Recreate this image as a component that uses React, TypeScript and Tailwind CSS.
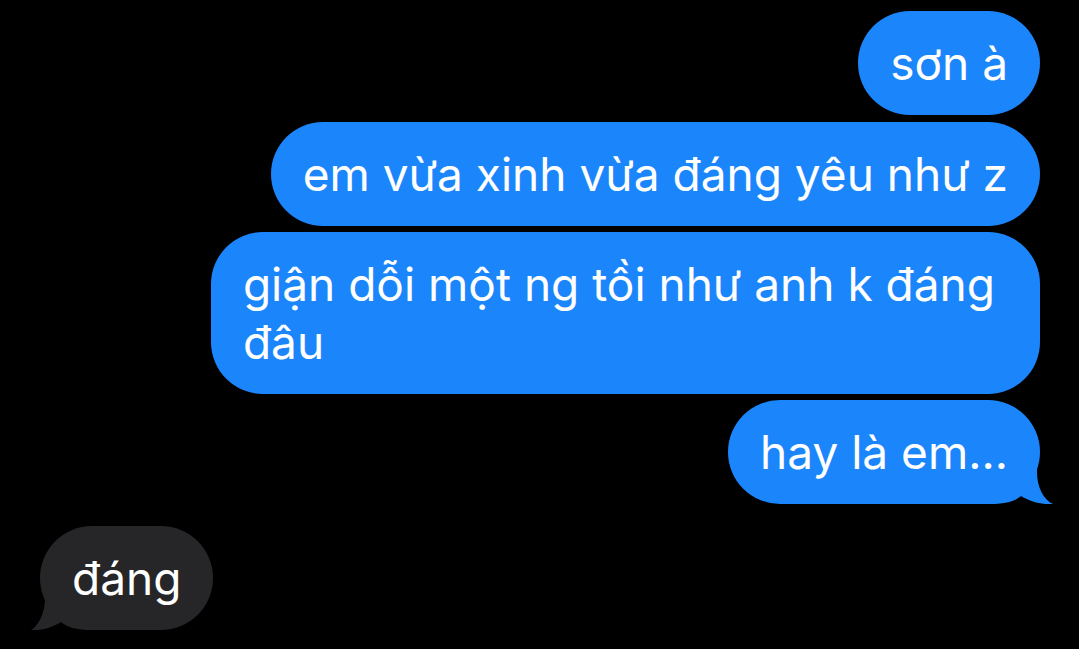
const BLUE = "bg-[#1b86fb]";

const Tail = ({ side, color }: { side: "left" | "right"; color: string }) =>
  side === "right" ? (
    <svg
      className="absolute bottom-0 right-[-13px]"
      width="64"
      height="60"
      viewBox="-51 -60 64 60"
      fill={color}
    >
      <path d="M -3 -60 L -3 -32 C -3 -16 4 -4 13 0 C 1 1 -11 -3 -19 -8 C -26 -2 -36 0 -51 0 L -51 -60 Z" />
    </svg>
  ) : (
    <svg
      className="absolute bottom-0 left-[-11px]"
      width="64"
      height="60"
      viewBox="-51 -60 64 60"
      fill={color}
      style={{ transform: "scaleX(-1)" }}
    >
      <path d="M -3 -60 L -3 -32 C -3 -16 4 -4 11 0 C 0 1 -11 -3 -19 -8 C -26 -2 -36 0 -51 0 L -51 -60 Z" />
    </svg>
  );

const Bubble = ({
  children,
  className = "",
}: {
  children: React.ReactNode;
  className?: string;
}) => (
  <div
    className={`relative rounded-[52px] px-[32px] py-[23px] text-[46px] leading-[58px] text-white ${className}`}
  >
    {children}
  </div>
);

export default function App() {
  return (
    <div
      className="w-[1079px] h-[649px] overflow-hidden bg-black pt-[11px]"
      style={{ fontFamily: "Inter, 'Noto Sans', sans-serif" }}
    >
      <div className="flex flex-col items-end pr-[39px]">
        <Bubble className={BLUE}>sơn à</Bubble>
        <Bubble className={`${BLUE} mt-[7px]`}>em vừa xinh vừa đáng yêu như z</Bubble>
        <Bubble className={`${BLUE} mt-[6px] pr-[45px]`}>
          giận dỗi một ng tồi như anh k đáng
          <br />
          đâu
        </Bubble>
        <Bubble className={`${BLUE} mt-[6px]`}>
          <span className="relative z-10">hay là em...</span>
          <Tail side="right" color="#1b86fb" />
        </Bubble>
      </div>
      <div className="mt-[22px] flex pl-[40px]">
        <Bubble className="bg-[#262628]">
          <span className="relative z-10">đáng</span>
          <Tail side="left" color="#262628" />
        </Bubble>
      </div>
    </div>
  );
}
